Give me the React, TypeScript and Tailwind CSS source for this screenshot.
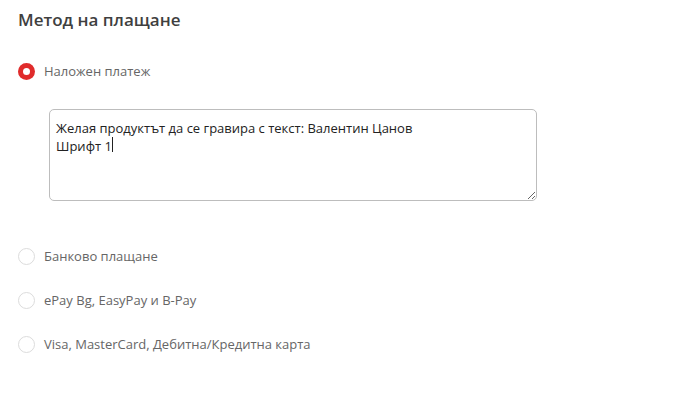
import { useState } from "react";

const methods = [
  { id: "cod", label: "Наложен платеж" },
  { id: "bank", label: "Банково плащане" },
  { id: "epay", label: "ePay Bg, EasyPay и B-Pay" },
  { id: "card", label: "Visa, MasterCard, Дебитна/Кредитна карта" },
];

function Radio({ checked }: { checked: boolean }) {
  return checked ? (
    <span className="flex size-[17px] items-center justify-center rounded-full bg-[#e02b2b]">
      <span className="size-[7px] rounded-full bg-white" />
    </span>
  ) : (
    <span className="size-[17px] rounded-full border border-[#dcdcdc] bg-white" />
  );
}

export default function App() {
  const [selected, setSelected] = useState("cod");

  return (
    <div className="min-h-[416px] w-[680px] bg-white pl-[18px] pt-[8px] font-['Open_Sans',sans-serif]">
      <h2 className="text-[17px] font-semibold leading-[23px] text-[#3f3f3f]">Метод на плащане</h2>

      <div className="mt-[31px] flex flex-col">
        {methods.map((m, i) => (
          <div key={m.id} className={i === 1 ? "mt-[46px]" : i > 1 ? "mt-[26px]" : ""}>
            <label
              className="flex h-[18px] cursor-pointer items-center gap-[9px]"
              onClick={() => setSelected(m.id)}
            >
              <Radio checked={selected === m.id} />
              <span className="text-[13px] leading-[18px] text-[#666]">{m.label}</span>
            </label>
            {m.id === "cod" && (
              <div className="relative ml-[31px] mt-[29px] h-[92px] w-[488px]">
                <textarea
                  readOnly
                  className="block h-[92px] w-[488px] resize rounded-[5px] border border-[#bdbdbd] px-[6px] pt-[9px] text-[13px] leading-[18px] text-[#222] outline-none"
                  defaultValue={"Желая продуктът да се гравира с текст: Валентин Цанов\nШрифт 1"}
                />
                <span className="absolute left-[63px] top-[28px] h-[15px] w-px bg-[#222]" />
              </div>
            )}
          </div>
        ))}
      </div>
    </div>
  );
}
